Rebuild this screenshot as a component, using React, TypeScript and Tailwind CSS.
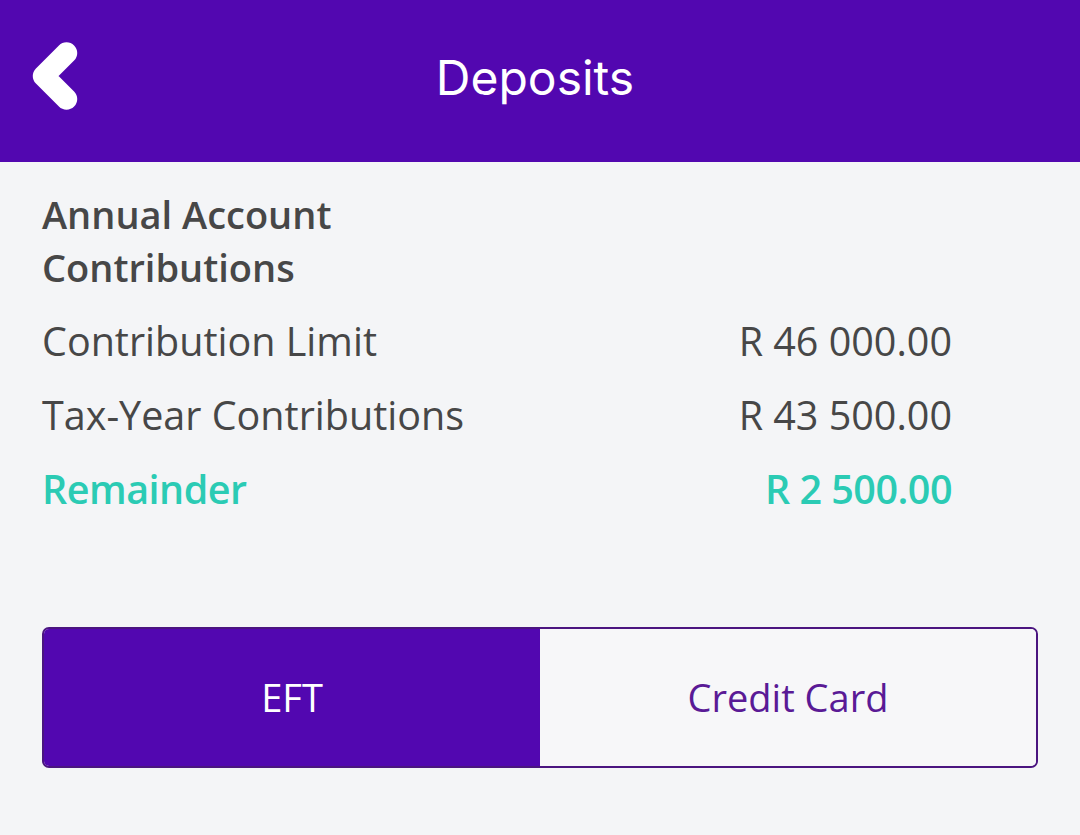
import { ChevronLeft } from "lucide-react";

type Row = {
  label: string;
  value: string;
  accent?: boolean;
};

const rows: Row[] = [
  { label: "Contribution Limit", value: "R 46 000.00" },
  { label: "Tax-Year Contributions", value: "R 43 500.00" },
  { label: "Remainder", value: "R 2 500.00", accent: true },
];

export default function App() {
  return (
    <div className="w-[1080px] h-[835px] bg-[#f4f5f7] flex flex-col font-['Open_Sans',sans-serif]">
      {/* Header */}
      <div className="h-[162px] bg-[#5207b0] flex items-center relative shrink-0">
        <button className="absolute left-[9px] top-[30px] text-white">
          <ChevronLeft size={92} strokeWidth={5.6} />
        </button>
        <h1 className="flex-1 text-center text-white text-[48px] font-['Inter',sans-serif] font-normal -mt-[6px] mr-[10px]">
          Deposits
        </h1>
      </div>

      {/* Contributions */}
      <div className="pl-[42px] pr-[128px] pt-[26px]">
        <h2 className="text-[38px] leading-[53px] font-semibold text-[#474747] w-[320px]">
          Annual Account Contributions
        </h2>
        <div className="flex flex-col mt-[20px] gap-[20px]">
          {rows.map((row) => (
            <div
              key={row.label}
              className={`flex justify-between text-[39.5px] leading-[54px] ${
                row.accent ? "text-[#2bcbb4] font-semibold tracking-[-0.5px]" : "text-[#474747]"
              }`}
            >
              <span>{row.label}</span>
              <span>{row.value}</span>
            </div>
          ))}
        </div>
      </div>

      {/* Payment method toggle */}
      <div className="px-[42px] mt-[111px]">
        <div className="flex h-[141px] rounded-[7px] border-2 border-[#4b1580] overflow-hidden">
          <button className="flex-1 bg-[#5207b0] text-white text-[38px]">EFT</button>
          <button className="flex-1 bg-[#f7f7f9] text-[#5a1a96] text-[38px]">Credit Card</button>
        </div>
      </div>
    </div>
  );
}
